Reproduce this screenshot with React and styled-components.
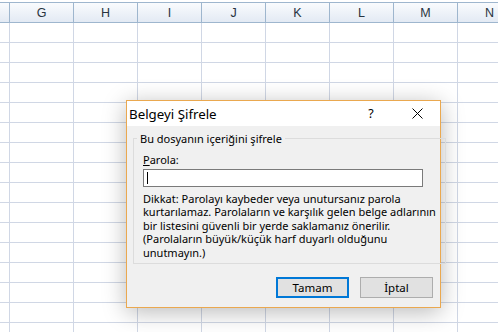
import React from 'react'
import styled, { createGlobalStyle } from 'styled-components'

const columns = ['', 'G', 'H', 'I', 'J', 'K', 'L', 'M', 'N']
const rowCount = 16

const GlobalStyle = createGlobalStyle`
  html, body {
    margin: 0;
    padding: 0;
    background: #ffffff;
    overflow: hidden;
  }
  body {
    font-family: "Noto Sans", "DejaVu Sans", sans-serif;
  }
`

const Screen = styled.div`
  position: relative;
  width: 498px;
  height: 332px;
  overflow: hidden;
  background: #ffffff;
  padding-top: 2px;
  box-sizing: border-box;
`

// Spreadsheet grid behind the dialog
const Sheet = styled.div`
  display: grid;
  grid-template-columns: 10px repeat(8, 64px);
  grid-auto-rows: 20px;
  grid-template-rows: 21px;
`

const HeaderCell = styled.div`
  box-sizing: border-box;
  border-top: 1px solid #9eb6ce;
  border-right: 1px solid #9eb6ce;
  border-bottom: 1px solid #9eb6ce;
  background: linear-gradient(#f9fbfd, #e3eaf4);
  display: flex;
  align-items: center;
  justify-content: center;
  padding-top: 1px;
  font-family: "Liberation Sans", Arial, sans-serif;
  font-size: 12.5px;
  color: #28343f;
`

const Cell = styled.div`
  box-sizing: border-box;
  border-right: 1px solid #d0d7e5;
  border-bottom: 1px solid #d0d7e5;
`

const Dialog = styled.div`
  position: absolute;
  left: 126px;
  top: 100px;
  width: 315px;
  height: 208px;
  box-sizing: border-box;
  border: 1px solid #eaa84f;
  background: #f0f0f0;
  box-shadow: 0 4px 22px rgba(0, 0, 0, 0.28);
  display: flex;
  flex-direction: column;
  font-size: 11px;
  color: #000000;
`

const TitleBar = styled.div`
  height: 25px;
  background: #ffffff;
  display: flex;
  align-items: center;
  padding-left: 2px;
`

const Title = styled.div`
  flex: 1;
  font-size: 13.3px;
  line-height: 16px;
`

const TitleButton = styled.div`
  width: 46px;
  height: 25px;
  display: flex;
  align-items: center;
  justify-content: center;
  font-size: 12.5px;
`

const Body = styled.div`
  flex: 1;
  display: flex;
  flex-direction: column;
  padding: 5px 7px 0 6px;
`

const Group = styled.fieldset`
  margin: 0;
  height: 133px;
  box-sizing: border-box;
  border: 1px solid #dcdcdc;
  padding: 0 9px 0 9px;
  display: flex;
  flex-direction: column;
`

const Legend = styled.legend`
  padding: 0 3px;
  margin-left: -6px;
  line-height: 15px;
`

const FieldLabel = styled.div`
  margin-top: 6px;
  line-height: 15px;
  u {
    text-decoration: underline;
    text-underline-offset: 1px;
  }
`

const Input = styled.div`
  margin-top: 2px;
  width: 280px;
  height: 18px;
  box-sizing: border-box;
  border: 1px solid #7a7a7a;
  background: #ffffff;
  display: flex;
  align-items: center;
  padding-left: 3px;
`

const Caret = styled.div`
  width: 1px;
  height: 12px;
  background: #000000;
`

const Note = styled.div`
  margin-top: 5px;
  line-height: 13.4px;
  white-space: nowrap;
`

const Buttons = styled.div`
  display: flex;
  justify-content: flex-end;
  gap: 11px;
  margin-top: 13px;
`

const Button = styled.div`
  width: 73px;
  height: 21px;
  box-sizing: border-box;
  background: #e1e1e1;
  border: ${(p) => (p.$default ? '2px solid #0078d7' : '1px solid #adadad')};
  display: flex;
  align-items: center;
  justify-content: center;
  font-size: 11.5px;
`

function CloseIcon() {
  return (
    <svg width="11" height="11" viewBox="0 0 11 11">
      <path d="M0.5 0.5 L10.5 10.5 M10.5 0.5 L0.5 10.5" stroke="#000" strokeWidth="1" fill="none" />
    </svg>
  )
}

export default function App() {
  const cells = []
  for (let r = 0; r < rowCount; r++) {
    columns.forEach((c, i) => cells.push(<Cell key={`${r}-${i}`} />))
  }

  return (
    <>
      <GlobalStyle />
      <Screen>
        <Sheet>
          {columns.map((c, i) => (
            <HeaderCell key={i}>{c}</HeaderCell>
          ))}
          {cells}
        </Sheet>

        <Dialog>
          <TitleBar>
            <Title>Belgeyi Şifrele</Title>
            <TitleButton>?</TitleButton>
            <TitleButton>
              <CloseIcon />
            </TitleButton>
          </TitleBar>
          <Body>
            <Group>
              <Legend>Bu dosyanın içeriğini şifrele</Legend>
              <FieldLabel>
                <u>P</u>arola:
              </FieldLabel>
              <Input>
                <Caret />
              </Input>
              <Note>
                Dikkat: Parolayı kaybeder veya unutursanız parola
                <br />
                kurtarılamaz. Parolaların ve karşılık gelen belge adlarının
                <br />
                bir listesini güvenli bir yerde saklamanız önerilir.
                <br />
                (Parolaların büyük/küçük harf duyarlı olduğunu
                <br />
                unutmayın.)
              </Note>
            </Group>
            <Buttons>
              <Button $default>Tamam</Button>
              <Button>İptal</Button>
            </Buttons>
          </Body>
        </Dialog>
      </Screen>
    </>
  )
}
